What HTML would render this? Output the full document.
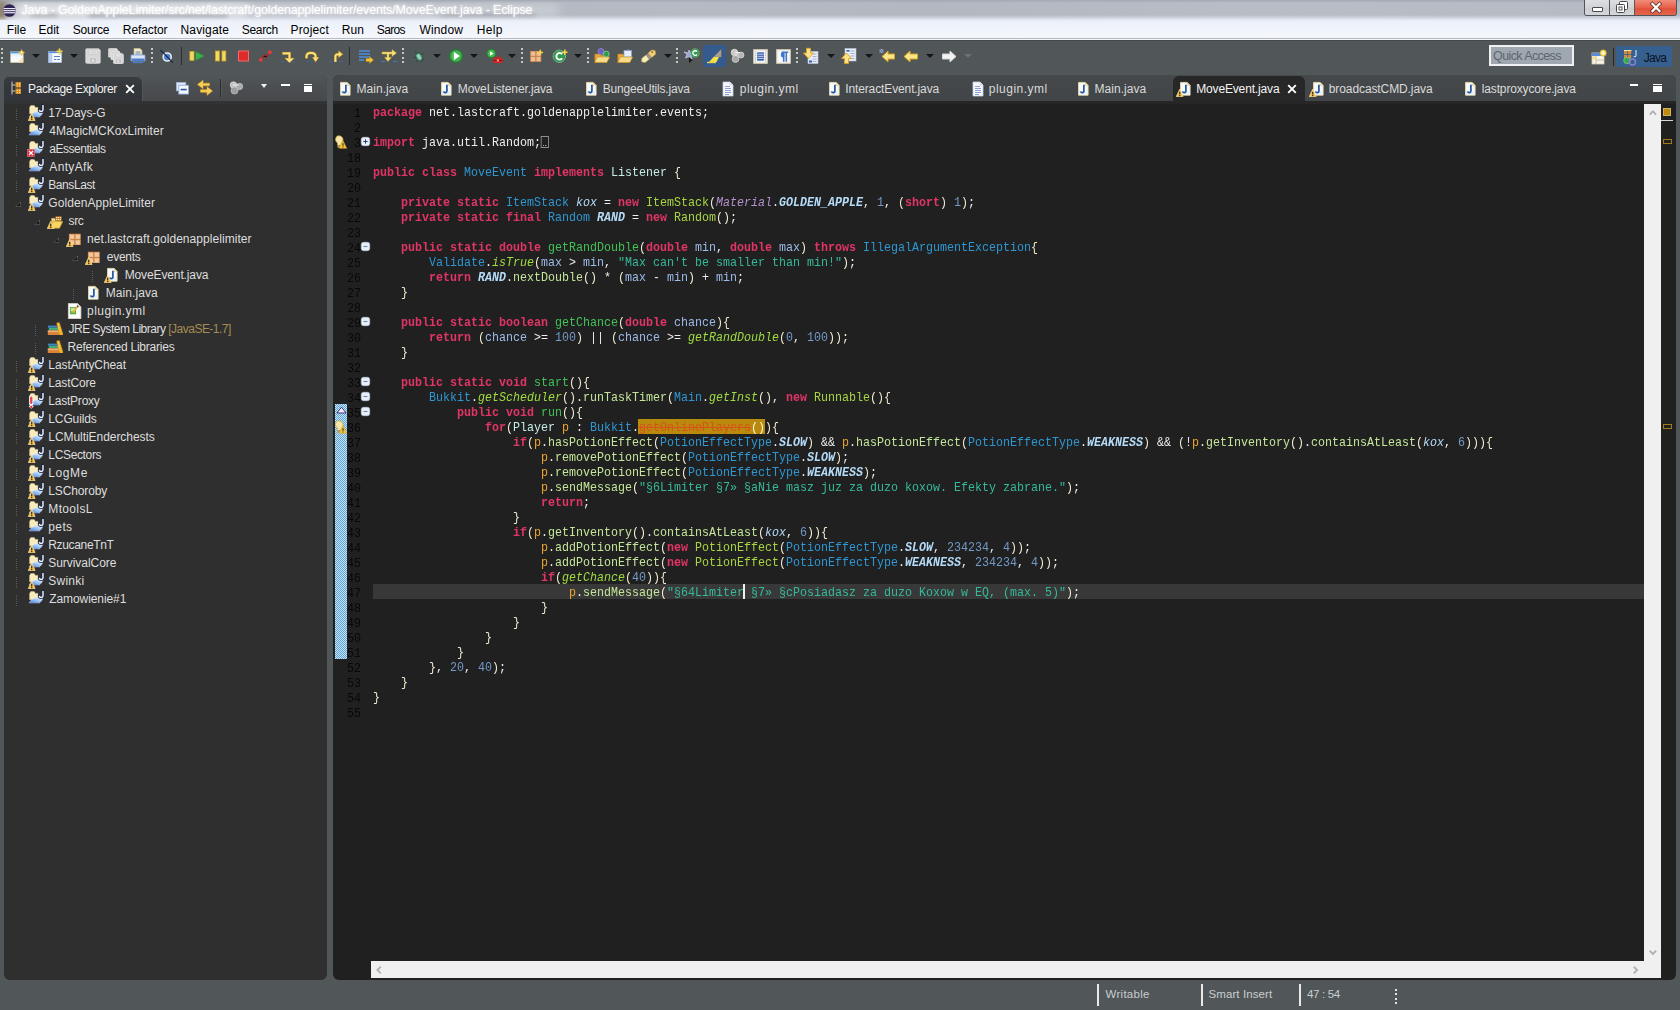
<!DOCTYPE html>
<html><head><meta charset="utf-8"><title>Eclipse</title>
<style>
*{box-sizing:border-box;margin:0;padding:0}
html,body{width:1680px;height:1010px;overflow:hidden}
body{position:relative;background:#515658;font-family:"Liberation Sans",sans-serif;font-size:12px;color:#e4e4e4}
.abs{position:absolute}
#title{left:0;top:0;width:1680px;height:20px;background:linear-gradient(90deg,#9a9a9c 0,#b9bcc2 1%,#b3b8c1 14%,#b6bbc3 40%,#b2b7c0 55%,#b9bec6 75%,#b5bac3 100%);overflow:hidden}
#title .txt{left:21px;top:3px;font-size:12.4px;color:#fff;white-space:nowrap;text-shadow:0 0 3px rgba(255,255,255,.75),0 0 6px rgba(255,255,255,.45)}
#menu{left:0;top:20px;width:1680px;height:20px;background:linear-gradient(180deg,#e6ebf5 0,#edf1fa 12%,#f0f4fb 45%,#f5f7fc 85%,#e4e8f0 100%)}
#menu span{position:absolute;top:3px;color:#000;font-size:12px;white-space:nowrap}
#tool{left:0;top:40px;width:1680px;height:36px;background:#515658}
.grip{position:absolute;top:48px;width:2px;height:16px;background:repeating-linear-gradient(180deg,#c6c6c6 0,#c6c6c6 1.800px,transparent 1.800px,transparent 4.450px)}
.dd{position:absolute;top:54px;width:0;height:0;border-left:4px solid transparent;border-right:4px solid transparent;border-top:4px solid #141618}
.vsep{position:absolute;top:47px;width:1px;height:18px;background:#2c2f31}
.ic{position:absolute;top:48px;width:16px;height:16px}
svg{display:block;overflow:visible}
/* panels */
.panel{position:absolute;border-radius:6px;overflow:hidden}
#left{left:4px;top:76px;width:323px;height:903.500px;background:#2f2f2f}
#left .tabbar{left:0;top:0;width:323px;height:24.500px;background:linear-gradient(#515658,#4c4f52 40%,#47494c)}
#left .atab{left:0;top:0;width:139px;height:25px;background:linear-gradient(#383c40,#32363a 60%);border-radius:6px 6px 0 0;box-shadow:inset -1px 1px 0 #50555a}
#ed{left:333px;top:75px;width:1343px;height:904.500px;background:#202020}
#ed .tabbar{left:0;top:0;width:1343px;height:26px;background:linear-gradient(#45494b,#424547)}
.tab{position:absolute;top:5px;font-size:12px;color:#dcdcdc;white-space:nowrap}
.tree{position:absolute;font-size:12px;color:#dedede;white-space:nowrap;height:18px;line-height:18px}
/* code */
#code{position:absolute;left:373px;top:105px;font-family:"Liberation Mono",monospace;font-size:12.800px;line-height:15px;color:#eeeeee;white-space:pre;transform:scaleX(.91146);transform-origin:0 0}
#code div{height:15px}
#ln{position:absolute;left:329.200px;top:106.600px;width:32px;text-align:right;font-family:"Liberation Mono",monospace;font-size:12px;line-height:15px;color:#080808;transform:scaleX(.9722);transform-origin:100% 0}
#ln div{height:15px}
.b{color:#f1ead0}
.k{color:#e13566;font-weight:bold}
.c{color:#2e97d3}
.i{color:#c4efe8}
.md{color:#42c256}
.m{color:#c4e69a}
.sm{color:#9fdc40;font-style:italic}
.ct{color:#a8d640}
.lv{color:#f0a62f}
.pv{color:#9dbbe9}
.n{color:#7399c6}
.s{color:#36b99a}
.sf{color:#b4dbf8;font-style:italic}
.sfb{color:#b4dbf8;font-style:italic;font-weight:bold}
.en{color:#b592cf;font-style:italic}
.depbg{color:#fdf6d8}
.dep{color:#d8521c;text-decoration:line-through}
#status{left:0;top:980px;width:1680px;height:30px}
#status span{position:absolute;top:8px;font-size:11.5px;color:#c9cdd0}
#status i{position:absolute;top:4px;width:2px;height:22px;background:#e8e8e8}
</style></head><body>
<style>
#m0{left:6.80px !important;letter-spacing:0.000px}
#m1{left:38.50px !important;letter-spacing:0.000px}
#m2{left:72.80px !important;letter-spacing:-0.260px}
#m3{left:122.80px !important;letter-spacing:-0.086px}
#m4{left:180.50px !important;letter-spacing:0.143px}
#m5{left:241.80px !important;letter-spacing:-0.320px}
#m6{left:290.50px !important;letter-spacing:0.167px}
#m7{left:341.80px !important;letter-spacing:0.000px}
#m8{left:376.80px !important;letter-spacing:-0.650px}
#m9{left:419.50px !important;letter-spacing:0.140px}
#m10{left:476.80px !important;letter-spacing:0.333px}
#tr0{left:48.30px !important;letter-spacing:-0.100px}
#tr1{left:49.30px !important;letter-spacing:0.018px}
#tr2{left:49.30px !important;letter-spacing:-0.470px}
#tr3{left:49.30px !important;letter-spacing:0.350px}
#tr4{left:48.30px !important;letter-spacing:-0.429px}
#tr5{left:48.30px !important;letter-spacing:0.076px}
#tr6{left:68.50px !important;letter-spacing:-0.350px}
#tr7{left:87.10px !important;letter-spacing:0.055px}
#tr8{left:106.80px !important;letter-spacing:-0.280px}
#tr9{left:124.70px !important;letter-spacing:-0.123px}
#tr10{left:105.80px !important;letter-spacing:0.063px}
#tr11{left:87.10px !important;letter-spacing:0.444px}
#tr12{left:68.50px !important;letter-spacing:-0.507px}
#tr13{left:67.50px !important;letter-spacing:-0.221px}
#tr14{left:48.30px !important;letter-spacing:-0.083px}
#tr15{left:48.30px !important;letter-spacing:-0.143px}
#tr16{left:48.30px !important;letter-spacing:-0.225px}
#tr17{left:48.30px !important;letter-spacing:-0.129px}
#tr18{left:48.30px !important;letter-spacing:-0.053px}
#tr19{left:48.30px !important;letter-spacing:-0.338px}
#tr20{left:48.30px !important;letter-spacing:0.600px}
#tr21{left:48.30px !important;letter-spacing:-0.125px}
#tr22{left:48.30px !important;letter-spacing:0.350px}
#tr23{left:48.30px !important;letter-spacing:0.367px}
#tr24{left:48.30px !important;letter-spacing:-0.344px}
#tr25{left:48.30px !important;letter-spacing:-0.055px}
#tr26{left:48.30px !important;letter-spacing:0.240px}
#tr27{left:49.30px !important;letter-spacing:-0.091px}
#t0{left:356.50px !important;letter-spacing:0.038px}
#t1{left:457.80px !important;letter-spacing:-0.125px}
#t2{left:602.80px !important;letter-spacing:-0.200px}
#t3{left:739.80px !important;letter-spacing:0.489px}
#t4{left:845.20px !important;letter-spacing:-0.118px}
#t5{left:988.80px !important;letter-spacing:0.489px}
#t6{left:1094.50px !important;letter-spacing:0.037px}
#t7{left:1196.20px !important;letter-spacing:-0.154px}
#t8{left:1328.80px !important;letter-spacing:-0.100px}
#t9{left:1481.80px !important;letter-spacing:-0.153px}
#s0{left:1105.50px !important;letter-spacing:0.286px}
#s1{left:1208.50px !important;letter-spacing:0.091px}
#s2{left:1307.00px !important;letter-spacing:-0.333px}
#ttl{left:21.50px !important;letter-spacing:-0.097px}
#pe{left:28.00px !important;letter-spacing:-0.367px}
#qa{left:1493.00px !important;letter-spacing:-0.591px}
#jv{left:1643.80px !important;letter-spacing:-0.700px}
</style>
<div id="title" class="abs">
 <div class="abs" style="left:14px;top:3px;width:235px;height:15px;border-radius:8px;background:#e4e6e9;filter:blur(4px);opacity:.95"></div>
 <div class="abs" style="left:200px;top:4px;width:360px;height:13px;border-radius:8px;background:#d9dce1;filter:blur(5px);opacity:.55"></div>
 <div class="abs" style="left:88px;top:15px;width:140px;height:4px;border-radius:3px;background:#7d8289;filter:blur(2px);opacity:.75"></div>
 <div class="abs" style="left:30px;top:15px;width:28px;height:4px;border-radius:3px;background:#8c9290;filter:blur(2px);opacity:.7"></div>
 <div class="abs" style="left:440px;top:14px;width:95px;height:5px;border-radius:3px;background:#8f949c;filter:blur(2.500px);opacity:.7"></div>
 <div class="abs" style="left:0;top:0;width:1680px;height:3px;background:linear-gradient(#a3a9b3,rgba(170,176,186,0))"></div>
 <div class="abs" style="left:0;top:15px;width:1680px;height:5px;background:linear-gradient(rgba(236,240,248,0),rgba(236,240,248,.85))"></div>
 <div class="abs" style="left:-3px;top:2px;width:9px;height:17px;background:#8f7d62;filter:blur(2.500px);opacity:.8"></div>
 <svg class="abs" style="left:3px;top:4px" width="13" height="13" viewBox="0 0 15 15"><circle cx="7.500" cy="7.500" r="7.300" fill="#2c2255"/><rect x="0.600" y="4.600" width="13.800" height="1.400" fill="#e9e9f3"/><rect x="0.300" y="7" width="14.400" height="1.400" fill="#e9e9f3"/><rect x="0.800" y="9.400" width="13.400" height="1.400" fill="#e9e9f3"/></svg>
 <div class="abs txt" id="ttl">Java - GoldenAppleLimiter/src/net/lastcraft/goldenapplelimiter/events/MoveEvent.java - Eclipse</div>
 <div class="abs" style="left:1584px;top:0;width:93px;height:16px;border-radius:0 0 3px 3px;overflow:hidden;border:1px solid #4f535a;border-top:0">
  <div class="abs" style="left:0;top:0;width:25px;height:16px;background:linear-gradient(#dcdee1,#d0d2d5 50%,#cbcdd0 51%,#d6d8db);border-right:1px solid #55595f"></div>
  <div class="abs" style="left:25px;top:0;width:25px;height:16px;background:linear-gradient(#dcdee1,#d0d2d5 50%,#cbcdd0 51%,#d6d8db);border-right:1px solid #55595f"></div>
  <div class="abs" style="left:50px;top:0;width:43px;height:16px;background:linear-gradient(#f08c78,#e8624c 45%,#e0503a 55%,#e46a50)"></div>
  <div class="abs" style="left:7px;top:7px;width:11px;height:5px;background:#fff;border:1px solid #4a4a4a;border-radius:1px"></div>
  <svg class="abs" style="left:31px;top:1px" width="12" height="12" viewBox="0 0 12 12"><rect x="3.500" y="0.500" width="8" height="8" rx="1" fill="#fff" stroke="#444"/><rect x="0.500" y="3.500" width="8" height="8" rx="1" fill="#fff" stroke="#444"/><rect x="3" y="6" width="3" height="3" fill="#fff" stroke="#555" stroke-width="1"/></svg>
  <svg class="abs" style="left:66px;top:3px" width="10" height="9" viewBox="0 0 10 9"><path d="M1.500 1 L8.500 8 M8.500 1 L1.500 8" stroke="#5a2a20" stroke-width="3.800" stroke-linecap="square"/><path d="M1.500 1 L8.500 8 M8.500 1 L1.500 8" stroke="#fff" stroke-width="2.300" stroke-linecap="square"/></svg>
 </div>
</div>
<div id="menu" class="abs">
<span id="m0" style="left:7px">File</span><span id="m1" style="left:39px">Edit</span><span id="m2" style="left:73px">Source</span><span id="m3" style="left:123px">Refactor</span><span id="m4" style="left:181px">Navigate</span><span id="m5" style="left:242px">Search</span><span id="m6" style="left:291px">Project</span><span id="m7" style="left:342px">Run</span><span id="m8" style="left:377px">Saros</span><span id="m9" style="left:419px">Window</span><span id="m10" style="left:477px">Help</span>
</div>
<div class="abs" style="left:0;top:38px;width:1680px;height:1px;background:#b8bcc4"></div>
<div class="abs" style="left:0;top:39px;width:1680px;height:1px;background:#f3f5f8"></div>
<div id="tool" class="abs"></div>
<div class="abs" style="left:0;top:40px;width:1680px;height:1px;background:#44484b"></div>
<div class="grip" style="left:1px"></div>
<!-- new -->
<svg class="ic" style="left:10px" viewBox="0 0 16 16"><defs><linearGradient id="gnw" x1="0" y1="0" x2="0" y2="1"><stop offset="0" stop-color="#cfe6fb"/><stop offset=".5" stop-color="#f4f9fe"/><stop offset="1" stop-color="#fdfaf0"/></linearGradient></defs><rect x=".6" y="3.800" width="12.600" height="10.800" fill="url(#gnw)" stroke="#d6c9a0" stroke-width=".5"/><rect x=".6" y="3.800" width="12.600" height="1.500" fill="#4f94e2"/><path d="M8 14.600l5.200-6v6z" fill="#f3e3b4"/><path d="M11.600 1.200l.9 2.400 2.400.9-2.400.9-.9 2.400-.9-2.400-2.400-.9 2.400-.9z" fill="#f8d548" stroke="#e0a820" stroke-width=".4"/><circle cx="11.600" cy="4.500" r=".9" fill="#fff8d8"/></svg>
<div class="dd" style="left:32px"></div>
<!-- new project -->
<svg class="ic" style="left:48px" viewBox="0 0 16 16"><rect x=".6" y="3.600" width="13" height="11" fill="#f8fbfe" stroke="#a9c2e6" stroke-width=".6"/><rect x=".6" y="3.600" width="13" height="1.500" fill="#4f8ad8"/><rect x="1" y="5.200" width="3.300" height="9" fill="#b4d0f2"/><path d="M6 8.500h6M6 11.500h2.300M9.300 11.500h2.700" stroke="#5a7fc0" stroke-width="1.200"/><path d="M11.500 .4v6M8.500 3.400h6" stroke="#f8d548" stroke-width="1.700"/></svg>
<div class="dd" style="left:70px"></div>
<!-- save -->
<svg class="ic" style="left:85px" viewBox="0 0 16 16"><path d="M.8 1.500q0-.7.7-.7h12.300l1.400 1.400v12.300q0 .7-.7.700h-13q-.7 0-.7-.7z" fill="#d6d6d6" stroke="#e6e6e6" stroke-width=".7"/><rect x="3.800" y="1.300" width="8.400" height="5.200" fill="#e4e4e4" stroke="#c4c4c4" stroke-width=".5"/><path d="M5 3h6M5 4.800h6" stroke="#c8c8c8" stroke-width=".7"/><rect x="4.200" y="9.300" width="7.600" height="5.700" fill="#c6c6c6" stroke="#e8e8e8" stroke-width=".6"/><rect x="6.800" y="11" width="2.400" height="3.200" fill="#e2e2e2" stroke="#b8b8b8" stroke-width=".4"/></svg>
<!-- save all -->
<svg class="ic" style="left:108px" viewBox="0 0 16 16"><path d="M.6 1.200q0-.6.6-.6h7.300l1 1v7.500h-8.900z" fill="#d6d6d6" stroke="#e6e6e6" stroke-width=".7"/><path d="M3 3.600q0-.6.6-.6h7.300l1 1v7.500h-8.900z" fill="#d6d6d6" stroke="#e6e6e6" stroke-width=".7"/><path d="M5.500 6.100q0-.6.6-.6h8l1.300 1.300v8q0 .6-.6.600h-8.700q-.6 0-.6-.6z" fill="#d6d6d6" stroke="#e8e8e8" stroke-width=".7"/><rect x="7.400" y="6" width="5.600" height="3" fill="#e4e4e4" stroke="#c4c4c4" stroke-width=".4"/><rect x="7.400" y="11" width="6" height="4.300" fill="#c4c4c4" stroke="#e8e8e8" stroke-width=".5"/><rect x="9.300" y="12.300" width="1.800" height="2.500" fill="#e2e2e2"/></svg>
<!-- print -->
<svg class="ic" style="left:130px" viewBox="0 0 16 16"><path d="M4 .5h6l2 2v5h-8z" fill="#f4ecd0" stroke="#cbb980" stroke-width=".7"/><rect x="5.500" y="3.500" width="5" height="1" fill="#5a86c4"/><rect x="5.500" y="5.500" width="5" height="1" fill="#5a86c4"/><path d="M1 7h14v6h-14z" fill="#dbe6f6" stroke="#7fa3d8" stroke-width=".8"/><rect x="1.500" y="10.500" width="13" height="2.500" fill="#4f7fcb"/><rect x="3" y="14" width="10" height="1.200" fill="#4f7fcb"/></svg>
<div class="grip" style="left:151px"></div>
<!-- skip breakpoints -->
<svg class="ic" style="left:160px" viewBox="0 0 16 16"><circle cx="7.200" cy="9" r="4" fill="#4f7fca" stroke="#e8eef8" stroke-width="1.600"/><path d="M.5 2.200l12.500 12.500" stroke="#15224e" stroke-width="1.200"/></svg>
<div class="vsep" style="left:180.500px"></div>
<!-- resume -->
<svg class="ic" style="left:189px" viewBox="0 0 18 16"><rect x="1" y="3" width="4.600" height="10" fill="#f3d965" stroke="#d2a923" stroke-width=".8"/><path d="M7.500 3l9.500 5-9.500 5z" fill="#38b24a" stroke="#2a8a3a" stroke-width=".6"/></svg>
<!-- suspend -->
<svg class="ic" style="left:213px" viewBox="0 0 16 16"><rect x="2.500" y="3" width="3.800" height="10" fill="#f3d965" stroke="#d2a923" stroke-width=".8"/><rect x="9" y="3" width="3.800" height="10" fill="#f3d965" stroke="#d2a923" stroke-width=".8"/></svg>
<!-- terminate -->
<svg class="ic" style="left:236px" viewBox="0 0 16 16"><rect x="2.500" y="3" width="10" height="10" fill="#e02b2b" stroke="#f36a6a" stroke-width="1"/></svg>
<!-- disconnect -->
<svg class="ic" style="left:257px" viewBox="0 0 16 16"><path d="M4 11.500l3-4 2 2 3.500-5" stroke="#b3262a" stroke-width="1.500" fill="none"/><circle cx="3.800" cy="11.800" r="1.900" fill="#e63b3b"/><circle cx="12.800" cy="4.200" r="1.900" fill="#e63b3b"/><rect x="6.500" y="7.800" width="3.500" height="1.200" fill="#201010"/></svg>
<!-- step into -->
<svg class="ic" style="left:280px" viewBox="0 0 16 16"><path d="M1 13.600h3.500M11 13.600h4" stroke="#4468a4" stroke-width="1.100" stroke-dasharray="1.600 1" opacity=".85"/><path d="M2.300 5.300h7.200v5.200" stroke="#c8981e" stroke-width="2.700" fill="none"/><path d="M4.300 10l5.200 4.900 5.200-4.900z" fill="#c8981e"/><path d="M2.600 5.300h6.900v5" stroke="#fbe382" stroke-width="1.700" fill="none"/><path d="M5.400 10.600l4.100 3.800 4.100-3.800z" fill="#fbe382"/></svg>
<!-- step over -->
<svg class="ic" style="left:304px" viewBox="0 0 16 16"><path d="M3 13.600h5.500" stroke="#4468a4" stroke-width="1.100" stroke-dasharray="1.600 1" opacity=".85"/><path d="M2.500 10.500v-2c0-2.400 1.800-3.700 4.500-3.700s4.600 1.300 4.600 3.700v1" stroke="#c8981e" stroke-width="2.700" fill="none"/><path d="M8 9.100l3.600 5.400 3.600-5.400z" fill="#c8981e"/><path d="M2.500 10.200v-1.700c0-2.400 1.800-3.700 4.500-3.700s4.600 1.300 4.600 3.700v1" stroke="#fbe382" stroke-width="1.700" fill="none"/><path d="M8.900 9.600l2.700 4 2.700-4z" fill="#fbe382"/></svg>
<!-- step return -->
<svg class="ic" style="left:328px" viewBox="0 0 16 16"><path d="M1 13.600h4M11 13.600h4" stroke="#4468a4" stroke-width="1.100" stroke-dasharray="1.600 1" opacity=".85"/><path d="M7.400 14v-5.500c0-1.600.8-2.200 2.600-2.200h1" stroke="#c8981e" stroke-width="2.700" fill="none"/><path d="M10.300 2.300l5 4-5 4z" fill="#c8981e"/><path d="M7.400 13.700v-5.200c0-1.600.8-2.200 2.600-2.200h1" stroke="#fbe382" stroke-width="1.700" fill="none"/><path d="M10.900 3.500l3.400 2.800-3.400 2.800z" fill="#fbe382"/></svg>
<div class="vsep" style="left:349px"></div>
<!-- drop to frame -->
<svg class="ic" style="left:358px" viewBox="0 0 16 16"><path d="M1 3h11M1 6h11M1 9h11M1 12h5" stroke="#4d8fe0" stroke-width="1.600"/><path d="M8 10.500h3.500v-2l4 3.500-4 3.500v-2h-3.500z" fill="#f4c534" stroke="#b98712" stroke-width=".5"/></svg>
<!-- step filters -->
<svg class="ic" style="left:381px" viewBox="0 0 16 16"><path d="M1 4h10v-2.500l4.500 3.500-4.500 3.500v-2.500h-3v3.500h2.500l-3.500 4-3.500-4h2.500v-3.500h-5z" fill="#f7e07a" stroke="#c9a030" stroke-width=".5"/><path d="M0 13.500h4M12 13.500h4" stroke="#4a78c0" stroke-width="1.200"/></svg>
<div class="grip" style="left:402px"></div>
<!-- debug -->
<svg class="ic" style="left:411px" viewBox="0 0 16 16"><path d="M3.500 3l2.500 2.500M12.500 5l-2 1.500M2.500 9.500l2.500-.2M13 11.500l-2.200-.5M5.500 14l1.200-2M10.500 14.500l-.8-1.800" stroke="#27483a" stroke-width=".9"/><ellipse cx="8" cy="8.800" rx="2.700" ry="4" transform="rotate(-28 8 8.800)" fill="#7cc4a8" stroke="#245c46" stroke-width=".8"/><path d="M6.800 7l2.600 3.500" stroke="#c8ecdc" stroke-width=".8"/><circle cx="5.700" cy="5" r="1.300" fill="#2f5e4a"/></svg>
<div class="dd" style="left:433px"></div>
<!-- run -->
<svg class="ic" style="left:448px" viewBox="0 0 16 16"><circle cx="8" cy="8" r="6.600" fill="#2e9a3c" stroke="#1f7a2c" stroke-width=".8"/><circle cx="8" cy="8" r="5.200" fill="#43b552"/><path d="M5.800 3.800l6 4.200-6 4.200z" fill="#fff"/></svg>
<div class="dd" style="left:470px"></div>
<!-- run ext -->
<svg class="ic" style="left:486px" viewBox="0 0 16 16"><circle cx="5.300" cy="5.500" r="4.500" fill="#2e9a3c" stroke="#1f7a2c" stroke-width=".6"/><circle cx="5.300" cy="5.500" r="3.500" fill="#4ab85a"/><path d="M4 3.200l3.500 2.300-3.500 2.300z" fill="#fff"/><path d="M7.400 10.300h9v4.700h-9z" fill="#d92222"/><path d="M9.500 10.300v-1.100h4.800v1.100" stroke="#d92222" stroke-width="1.100" fill="none"/><rect x="7.400" y="12" width="9" height=".9" fill="#7c1010"/><rect x="10.800" y="11.500" width="2.200" height="1.800" fill="#f0a0a0"/></svg>
<div class="dd" style="left:508px"></div>
<div class="grip" style="left:521px"></div>
<!-- new package -->
<svg class="ic" style="left:529px" viewBox="0 0 16 16"><rect x="1.300" y="2.900" width="11" height="11" fill="#b06a3a"/><rect x="1.800" y="3.400" width="4.600" height="4.600" fill="#ecc096" stroke="#d8905a" stroke-width=".6"/><rect x="7.200" y="3.400" width="4.600" height="4.600" fill="#ecc096" stroke="#d8905a" stroke-width=".6"/><rect x="1.800" y="8.800" width="4.600" height="4.600" fill="#ecc096" stroke="#d8905a" stroke-width=".6"/><rect x="7.200" y="8.800" width="4.600" height="4.600" fill="#ecc096" stroke="#d8905a" stroke-width=".6"/><path d="M11.300 1.800v5.400M8.600 4.500h5.400" stroke="#f8d548" stroke-width="1.500"/></svg>
<!-- new class -->
<svg class="ic" style="left:552px" viewBox="0 0 16 16"><circle cx="7.300" cy="8.300" r="6.200" fill="#2f9a4c" stroke="#a6dcb4" stroke-width=".8" stroke-dasharray="1.500 .8"/><path d="M10.200 6.200a3.300 3.300 0 1 0 0 4.200" stroke="#fff" stroke-width="1.900" fill="none"/><path d="M12.800 1.500v5.400M10.100 4.200h5.400" stroke="#f8d548" stroke-width="1.500"/></svg>
<div class="dd" style="left:574px"></div>
<div class="grip" style="left:587px"></div>
<!-- open type -->
<svg class="ic" style="left:594px" viewBox="0 0 16 16"><path d="M.8 6h5l1 1.200h6v7.300h-12z" fill="#e9a93c" stroke="#b87a18" stroke-width=".6"/><path d="M.8 14.500l2.500-5.500h12.500l-3 5.500z" fill="#f8dc8c" stroke="#c08a20" stroke-width=".6"/><circle cx="7" cy="3.500" r="3" fill="#6a5fc0" stroke="#9b94de" stroke-width=".7"/><circle cx="12.300" cy="6" r="2.900" fill="#2f9a4c" stroke="#8fd6a0" stroke-width=".7"/></svg>
<!-- open task -->
<svg class="ic" style="left:617px" viewBox="0 0 16 16"><path d="M.8 6h5l1 1.200h6v7.300h-12z" fill="#e9a93c" stroke="#b87a18" stroke-width=".6"/><rect x="7" y="2.500" width="7.500" height="6.500" fill="#e6eefc" stroke="#8ea8d8" stroke-width=".7"/><path d="M9 2.500l2-1.500 2 1.500" fill="#7a8db8"/><path d="M.8 14.500l2.500-5.500h12.500l-3 5.500z" fill="#f8dc8c" stroke="#c08a20" stroke-width=".6"/></svg>
<!-- search torch -->
<svg class="ic" style="left:641px" viewBox="0 0 18 16"><g transform="rotate(-39 9 8)"><path d="M-1.500 8l2.500-3h6v6h-6z" fill="#f6eeb4" stroke="#cdbb62" stroke-width=".5"/><rect x="7" y="5" width="3.200" height="6" fill="#9d9390"/><path d="M10.200 4.700h5.800l2.200 3.300-2.200 3.300h-5.800z" fill="#efcf78" stroke="#b8923a" stroke-width=".5"/><circle cx="14.500" cy="6.800" r=".8" fill="#3a2c10"/></g></svg>
<div class="dd" style="left:664px"></div>
<div class="grip" style="left:676px"></div>
<!-- toggle mark occurrences-ish -->
<svg class="ic" style="left:684px" viewBox="0 0 16 16"><path d="M0 4l4 1 1-3 1.500 3 3.500-.5-3 2.500 1 4-3-2.500-3.500 1.500 1.500-3.500z" fill="#9aa6d8" stroke="#d8def4" stroke-width=".6"/><circle cx="11" cy="5" r="4.300" fill="#2f9a4c" stroke="#8fd6a0" stroke-width=".7" stroke-dasharray="1.300 .7"/><path d="M13 3.600a2.300 2.300 0 1 0 0 2.900" stroke="#fff" stroke-width="1.400" fill="none"/><path d="M5 9.500l3.500 2.500-3.500 3z" fill="#161616"/></svg>
<div class="abs" style="left:703.300px;top:44.700px;width:23.200px;height:22.500px;background:#355b8e;border-radius:3px"></div>
<!-- marker -->
<svg class="ic" style="left:707px" viewBox="0 0 16 16"><path d="M2 14l5-5.500 5 .5-2.500 5z" fill="#f3e04a"/><path d="M7 8.500l7.500-7.500v8l-2.500 0z" fill="#a89f8c"/><path d="M14.500 1v8" stroke="#6e665a" stroke-width="1"/><path d="M0 14.500h9" stroke="#e8d24a" stroke-width="1.400"/></svg>
<!-- disabled icon -->
<svg class="ic" style="left:730px" viewBox="0 0 16 16"><circle cx="4.500" cy="4.500" r="3.300" fill="#c9c9c9" stroke="#e6e6e6" stroke-width=".7"/><circle cx="11" cy="7" r="3" fill="#b6b6b6" stroke="#dedede" stroke-width=".7"/><circle cx="5.500" cy="11" r="3.400" fill="#a9a9a9" stroke="#d8d8d8" stroke-width=".7"/><path d="M5 4.500h5M5 7h3" stroke="#f0f0f0" stroke-width="1"/></svg>
<!-- block selection -->
<svg class="ic" style="left:752.500px;top:48.500px;width:15px;height:15px" viewBox="0 0 16 16"><rect x=".8" y=".8" width="14.400" height="14.400" fill="#f4f6fa" stroke="#d8cfb4" stroke-width="1.200"/><path d="M2.800 2.500v11M13.200 2.500v11" stroke="#9aa6c0" stroke-width="1" stroke-dasharray="1 1"/><rect x="4.500" y="3.500" width="7" height="9" fill="#3a5fa8"/><path d="M5 5.500h6M5 7.800h6M5 10h6" stroke="#dfe8f8" stroke-width=".9"/></svg>
<!-- whitespace -->
<svg class="ic" style="left:775.500px;top:48.500px;width:15px;height:15px" viewBox="0 0 16 16"><rect x=".8" y=".8" width="14.400" height="14.400" fill="#f8f9fc" stroke="#d8cfb4" stroke-width="1.200"/><path d="M8.200 13.500v-10M11 13.500v-10M6 3.500h7" stroke="#3f74c8" stroke-width="1.700" fill="none"/><path d="M8.200 3.500a2.700 2.700 0 0 0 0 5.400z" fill="#3f74c8" stroke="#3f74c8" stroke-width="1"/></svg>
<div class="grip" style="left:796px"></div>
<!-- next annotation -->
<svg class="ic" style="left:803px" viewBox="0 0 16 16"><rect x="5" y="3.500" width="10" height="12" fill="#e8eef8" stroke="#b8c4d8" stroke-width=".6"/><path d="M9.500 6h4M9.500 8.500h4M9.500 11h4M9.500 13.500h4" stroke="#8ea0c0" stroke-width=".8"/><rect x="6" y="12.500" width="3" height="2" fill="#2f5fb0"/><path d="M3.500 .3h4v4.700h3l-5 5.500-5-5.500h3z" fill="#fbe28a" stroke="#e0a020" stroke-width=".9"/></svg>
<div class="dd" style="left:827px"></div>
<!-- prev annotation -->
<svg class="ic" style="left:841px" viewBox="0 0 16 16"><rect x="4" y=".5" width="11" height="12.500" fill="#e8eef8" stroke="#b8c4d8" stroke-width=".6"/><rect x="5.500" y="2" width="3" height="1.600" fill="#2f5fb0"/><path d="M9.500 3h4M9.500 5.500h4M9.500 8h4M9.500 10.500h4" stroke="#8ea0c0" stroke-width=".8"/><path d="M3.500 15.500h4v-5h3l-5-5.500-5 5.500h3z" fill="#fbe28a" stroke="#e0a020" stroke-width=".9"/></svg>
<div class="dd" style="left:865px"></div>
<!-- last edit -->
<svg class="ic" style="left:879px" viewBox="0 0 16 16"><path d="M3 8.500l6-5.500v3h6.500v5h-6.500v3z" fill="#fae68a" stroke="#d9a520" stroke-width="1"/><path d="M1 1.500l3 3M4 1.500l-3 3M2.500 1v4M.5 3h4" stroke="#cfe0f8" stroke-width=".8"/><circle cx="2.500" cy="3" r="1" fill="#3f74c8"/></svg>
<!-- back -->
<svg class="ic" style="left:903px" viewBox="0 0 16 16"><path d="M1 8.500l6-5.500v3h7.500v5h-7.500v3z" fill="#fae68a" stroke="#d9a520" stroke-width="1"/></svg>
<div class="dd" style="left:926px"></div>
<!-- forward -->
<svg class="ic" style="left:941px" viewBox="0 0 16 16"><path d="M15 8.500l-6-5.500v3h-7.500v5h7.500v3z" fill="#f4f4f4" stroke="#d8d8d8" stroke-width="1"/></svg>
<div class="dd" style="left:964px;border-top-color:#6d7173"></div>
<!-- quick access -->
<div class="abs" style="left:1489px;top:45px;width:85px;height:21px;background:#9fa7b0;border:2px solid #eef0f2"></div>
<div class="abs" style="left:1493px;top:49px;font-size:12.5px;color:#5d656e;white-space:nowrap" id="qa">Quick Access</div>
<!-- open perspective -->
<svg class="ic" style="left:1591px;top:49px" viewBox="0 0 16 16"><rect x="1" y="4" width="12" height="11" fill="#f4f4ec" stroke="#d8d2b0" stroke-width=".8"/><rect x="1" y="4" width="12" height="3" fill="#5a8fd8"/><path d="M5 7v8M5 11h8" stroke="#c9c29a" stroke-width="1"/><rect x="1.500" y="7.500" width="3" height="3.200" fill="#f2e08a"/><circle cx="12.200" cy="4" r="3.200" fill="#f6d85a" stroke="#c9a020" stroke-width=".5"/><path d="M12.200 2v4M10.200 4h4" stroke="#fff" stroke-width="1.100"/></svg>
<div class="vsep" style="left:1613px;top:48px;width:1px;height:18px;background:#25282a"></div>
<div class="abs" style="left:1616px;top:46px;width:56px;height:21.400px;background:#36608f;border-radius:2px"></div>
<svg class="ic" style="left:1623px;top:50px" viewBox="0 0 16 16"><rect x="1" y="1" width="3.200" height="3.200" fill="#d98a3c"/><rect x="5" y="1" width="3.200" height="3.200" fill="#d98a3c"/><rect x="1" y="5" width="3.200" height="3.200" fill="#d98a3c"/><rect x="5" y="5" width="3.200" height="3.200" fill="#d98a3c"/><path d="M1 .5h7.500" stroke="#f6e6a0" stroke-width="1"/><path d="M13 0v5.500c0 1.500-2 1.500-2 .5" stroke="#cfe0f8" stroke-width="1.100" fill="none"/><circle cx="4" cy="10.500" r="3.300" fill="#3aa84a" stroke="#8fd6a0" stroke-width=".6"/><circle cx="9.500" cy="12" r="3" fill="none" stroke="#8a7fd8" stroke-width="1.400"/></svg>
<div class="abs" style="left:1643px;top:51px;font-size:12px;color:#0b1220;white-space:nowrap" id="jv">Java</div>
<svg width="0" height="0" style="position:absolute">
<defs>
<linearGradient id="gfold" x1="0" y1="1" x2="1" y2="0"><stop offset="0" stop-color="#3a7ae4"/><stop offset=".45" stop-color="#8fbcf4"/><stop offset="1" stop-color="#eef5fd"/></linearGradient>
<symbol id="proj" viewBox="0 0 16 16" overflow="visible"><path d="M1.600 3.400l1.200-1.800h3.400l1.200 1.800h2.500v6.400h-8.300z" fill="#f8ebbc" stroke="#ecd898" stroke-width=".4"/><path d="M1 12.900c2.300-3.200 5.300-5.100 8.400-5.300l5.500.5c-.9 2.500-2.100 4-3.600 4.800z" fill="url(#gfold)" stroke="#e9f0fb" stroke-width=".45"/><path d="M1.200 12.900h9.800" stroke="#2a4fa8" stroke-width=".6" opacity=".7"/><path d="M15 1v4.700c0 2.300-3.500 2.400-3.700 .2" stroke="#18244e" stroke-width="2.900" fill="none" stroke-linecap="round"/><path d="M15 1v4.700c0 2.300-3.500 2.400-3.700 .2" stroke="#f4f7fc" stroke-width="1.400" fill="none"/></symbol>
<symbol id="warn" viewBox="0 0 8 8" preserveAspectRatio="none"><path d="M4 .2l3.800 7.600h-7.600z" fill="#f6c24e" stroke="#fbe3a4" stroke-width=".7" stroke-linejoin="round"/><path d="M4 2.800v2.600" stroke="#2a1a00" stroke-width="1.200"/><rect x="3.400" y="6" width="1.200" height="1.100" fill="#2a1a00"/></symbol>
<symbol id="err" viewBox="0 0 8 8"><rect x=".3" y=".3" width="7.400" height="7.400" fill="#d9293c" stroke="#f08a94" stroke-width=".5"/><path d="M2 2l4 4M6 2l-4 4" stroke="#fff" stroke-width="1.300"/></symbol>
<symbol id="excl" viewBox="0 0 6.500 13" preserveAspectRatio="none"><path d="M3.250 1.600v6" stroke="#fff" stroke-width="4.200" stroke-linecap="round"/><path d="M3.250 8.500l2.600 2.100-2.600 2.100-2.600-2.100z" fill="#fff"/><path d="M3.250 1.700v5" stroke="#e8434e" stroke-width="2.400" stroke-linecap="round"/><path d="M3.250 9.500l1.600 1.400-1.600 1.400-1.600-1.400z" fill="#e02c3c"/></symbol>
<symbol id="pkg" viewBox="0 0 16 16"><rect x="2.900" y="4.800" width="11.600" height="11.400" fill="#a8602c"/><rect x="3.300" y="5.200" width="5" height="4.900" fill="#f3c89e" stroke="#dc9456" stroke-width=".7"/><rect x="9.200" y="5.200" width="5" height="4.900" fill="#f3c89e" stroke="#dc9456" stroke-width=".7"/><rect x="3.300" y="11" width="5" height="4.900" fill="#f3c89e" stroke="#dc9456" stroke-width=".7"/><rect x="9.200" y="11" width="5" height="4.900" fill="#f3c89e" stroke="#dc9456" stroke-width=".7"/></symbol>
<symbol id="srcf" viewBox="0 0 16 16"><path d="M4.500 5.200h3.500l1 1.300h4v3h-8.500z" fill="#f2d986" stroke="#c89c30" stroke-width=".5"/><rect x="8.300" y="3.200" width="6.300" height="5" fill="#a8662a"/><path d="M9 3.900h1.400v1.400h-1.400zM10.900 3.900h1.400v1.400h-1.400zM12.800 3.900h1.400v1.400h-1.400zM9 5.900h1.400v1.400h-1.400zM10.900 5.900h1.400v1.400h-1.400zM12.800 5.900h1.400v1.400h-1.400z" fill="#fbe9a6"/><path d="M3 15.200l2.800-6.800h10l-3.300 6.800z" fill="#f9d65e" stroke="#c8962a" stroke-width=".6"/></symbol>
<symbol id="jfile" viewBox="0 0 16 16"><path d="M3.500 1.400h6.600l3 3v9.800h-9.600z" fill="#f6f9fd" stroke="#e9d7a0" stroke-width=".9"/><path d="M3.900 10h8.800v3.800h-8.800z" fill="#e2f0fa" opacity=".8"/><path d="M10.100 1.400v3h3" fill="#efe2b4" stroke="#e0cc90" stroke-width=".6"/><path d="M8.900 3.800v6.200c0 2-2.600 2.200-3.400.5" stroke="#24539a" stroke-width="1.700" fill="none"/></symbol>
<symbol id="yml" viewBox="0 0 16 16"><path d="M3 1h7l3 3v11h-10z" fill="#f7f9fd" stroke="#c8cede" stroke-width=".8"/><path d="M10 1v3h3" fill="#dfe4f0" stroke="#c8cede" stroke-width=".6"/><path d="M5 5.500h5M5 7.500h6M5 9.500h6M5 11.500h6M5 13.500h4" stroke="#7f97c8" stroke-width=".9"/></symbol>
<symbol id="ymlp" viewBox="0 0 16 16"><path d="M2.400 .4h9l3.500 3.500v11.800h-12.500z" fill="#fcfcfa" stroke="#dcd8cc" stroke-width=".8"/><path d="M11.400 .4v3.500h3.500" fill="#ece8dc" stroke="#d4d0c4" stroke-width=".6"/><rect x="4.200" y="4.500" width="5.600" height="6.500" fill="#6cbf4a" stroke="#3f8a2c" stroke-width=".5"/><rect x="4.800" y="5.200" width="4.400" height="3" fill="#c8e89a"/><path d="M7 9.500l4.800-6.300" stroke="#e8b828" stroke-width="1.500"/><path d="M11.300 3.800l.9-1.200" stroke="#2a2a2a" stroke-width="1.300"/></symbol>
<symbol id="lib" viewBox="0 0 16 16"><rect x="1" y="6.600" width="9" height="2.100" fill="#3a86c8"/><rect x="1.800" y="8.800" width="9.400" height="2.500" fill="#3fae7a"/><rect x=".8" y="11.500" width="11.600" height="4.600" fill="#d9823a"/><rect x=".8" y="11.500" width="11.600" height="1.600" fill="#f2b27a"/><path d="M9.600 3.900l2.800-.5 3.900 12.700h-4z" fill="#efb226" stroke="#c88a12" stroke-width=".4"/><path d="M11 5.500l.8 2.500.8 2.500.8 2.500" stroke="#fff3c8" stroke-width="1" stroke-dasharray="1 1.600" fill="none"/></symbol>
<symbol id="exp" viewBox="0 0 8 8"><path d="M6.800 1.200v5.600h-5.600z" fill="#161616" stroke="#a8a8a8" stroke-width=".6" stroke-dasharray="1 .6"/></symbol>
<symbol id="xclose" viewBox="0 0 10 10"><path d="M1.200 1.200l7.600 7.600M8.800 1.200l-7.600 7.600" stroke="#fff" stroke-width="1.900"/></symbol>
</defs></svg>
<div id="left" class="panel"><div class="abs tabbar"></div><div class="abs atab"></div><div class="abs" style="left:0;top:24.500px;width:323px;height:3.500px;background:#323335"></div></div>
<svg class="abs" style="left:11px;top:81px" width="11" height="14" viewBox="0 0 11 14"><path d="M1 .5v13M1 4h3.500M1 10h3.500" stroke="#c8c8c8" stroke-width="1"/><rect x="4.500" y="1" width="5.500" height="5.500" fill="#d98a1e"/><rect x="4.500" y="7.500" width="5.500" height="5.500" fill="#d98a1e"/><path d="M5.800 2.300h1.200v1.200h-1.200zM8 2.300h1.200v1.200h-1.200zM5.800 4.400h1.200v1.200h-1.200zM8 4.400h1.200v1.200h-1.200zM5.800 8.800h1.200v1.200h-1.200zM8 8.800h1.200v1.200h-1.200zM5.800 10.900h1.200v1.200h-1.200zM8 10.900h1.200v1.200h-1.200z" fill="#fbe49a"/></svg>
<div class="tab" style="left:28px;top:82px;color:#f2f2f2" id="pe">Package Explorer</div>
<svg class="abs" style="left:125px;top:84px" width="10" height="10"><use href="#xclose"/></svg>
<svg class="abs" style="left:176px;top:82px" width="13" height="13" viewBox="0 0 14 14"><rect x=".5" y=".5" width="10" height="9" fill="#dfe9f8" stroke="#9fb6dc" stroke-width=".8"/><rect x="3" y="3.500" width="10.500" height="9.500" fill="#f4f8fd" stroke="#8eaadc" stroke-width=".9"/><rect x="5" y="7.300" width="6.500" height="1.700" fill="#2c4f9a"/></svg>
<svg class="abs" style="left:197px;top:80px" width="16" height="16" viewBox="0 0 16 16"><path d="M.5 4.500l5.500-4.300v3h6.500v2.600h-6.500v3z" fill="#f6cf5a" stroke="#e8a820" stroke-width=".6"/><path d="M15.500 11l-5.500-4.300v3h-6.500v2.600h6.500v3z" fill="#f6cf5a" stroke="#e8a820" stroke-width=".6"/></svg>
<div class="abs" style="left:219.500px;top:79px;width:1px;height:18px;background:#2b2d2f"></div><div class="abs" style="left:220.500px;top:79px;width:1px;height:18px;background:#54585b"></div>
<svg class="abs" style="left:229px;top:81px" width="15" height="14" viewBox="0 0 15 14"><circle cx="4.500" cy="4" r="3.300" fill="#c4c4c4" stroke="#e0e0e0" stroke-width=".6"/><circle cx="10.500" cy="5.500" r="3.200" fill="#aaaaaa" stroke="#d4d4d4" stroke-width=".6"/><circle cx="5.500" cy="9.500" r="3.500" fill="#9d9d9d" stroke="#cfcfcf" stroke-width=".6"/><path d="M4 4h6" stroke="#eee" stroke-width="1"/></svg>
<div class="abs" style="left:261px;top:83.500px;width:0;height:0;border-left:3.700px solid transparent;border-right:3.700px solid transparent;border-top:4px solid #f4f4f4"></div>
<div class="abs" style="left:281px;top:83.500px;width:8.500px;height:2.700px;background:#fff"></div>
<div class="abs" style="left:303.600px;top:83.500px;width:8.500px;height:8.500px;background:#fff"></div><div class="abs" style="left:303.600px;top:84.700px;width:8.500px;height:1.200px;background:#4a4d50"></div>
<div class="abs" style="left:16px;top:109px;width:1px;height:11px;background:repeating-linear-gradient(180deg,#5c5c5c 0,#5c5c5c 1px,transparent 1px,transparent 2px)"></div>
<svg class="abs" style="left:28px;top:104px" width="16" height="16"><use href="#proj"/></svg>
<svg class="abs" style="left:27.7px;top:113px" width="7.500" height="8"><use href="#warn"/></svg>
<div class="tree" id="tr0" style="left:49px;top:104px">17-Days-G</div>
<div class="abs" style="left:16px;top:127px;width:1px;height:11px;background:repeating-linear-gradient(180deg,#5c5c5c 0,#5c5c5c 1px,transparent 1px,transparent 2px)"></div>
<svg class="abs" style="left:28px;top:122px" width="16" height="16"><use href="#proj"/></svg>
<div class="tree" id="tr1" style="left:49px;top:122px">4MagicMCKoxLimiter</div>
<div class="abs" style="left:16px;top:145px;width:1px;height:11px;background:repeating-linear-gradient(180deg,#5c5c5c 0,#5c5c5c 1px,transparent 1px,transparent 2px)"></div>
<svg class="abs" style="left:28px;top:140px" width="16" height="16"><use href="#proj"/></svg>
<svg class="abs" style="left:27px;top:149px" width="8" height="8"><use href="#err"/></svg>
<div class="tree" id="tr2" style="left:49px;top:140px">aEssentials</div>
<div class="abs" style="left:16px;top:163px;width:1px;height:11px;background:repeating-linear-gradient(180deg,#5c5c5c 0,#5c5c5c 1px,transparent 1px,transparent 2px)"></div>
<svg class="abs" style="left:28px;top:158px" width="16" height="16"><use href="#proj"/></svg>
<div class="tree" id="tr3" style="left:49px;top:158px">AntyAfk</div>
<div class="abs" style="left:16px;top:181px;width:1px;height:11px;background:repeating-linear-gradient(180deg,#5c5c5c 0,#5c5c5c 1px,transparent 1px,transparent 2px)"></div>
<svg class="abs" style="left:28px;top:176px" width="16" height="16"><use href="#proj"/></svg>
<svg class="abs" style="left:27.7px;top:185px" width="7.500" height="8"><use href="#warn"/></svg>
<div class="tree" id="tr4" style="left:49px;top:176px">BansLast</div>
<svg class="abs" style="left:15px;top:200.5px" width="6.500" height="6.500"><use href="#exp"/></svg>
<svg class="abs" style="left:28px;top:194px" width="16" height="16"><use href="#proj"/></svg>
<svg class="abs" style="left:27.7px;top:203px" width="7.500" height="8"><use href="#warn"/></svg>
<div class="tree" id="tr5" style="left:49px;top:194px">GoldenAppleLimiter</div>
<svg class="abs" style="left:34px;top:218.5px" width="6.500" height="6.500"><use href="#exp"/></svg>
<svg class="abs" style="left:47px;top:213px" width="16" height="16"><use href="#srcf"/></svg>
<svg class="abs" style="left:46.7px;top:221px" width="7.500" height="8"><use href="#warn"/></svg>
<div class="tree" id="tr6" style="left:68px;top:212px">src</div>
<svg class="abs" style="left:53px;top:236.5px" width="6.500" height="6.500"><use href="#exp"/></svg>
<svg class="abs" style="left:66px;top:229px" width="16" height="16"><use href="#pkg"/></svg>
<svg class="abs" style="left:65.7px;top:239px" width="7.500" height="8"><use href="#warn"/></svg>
<div class="tree" id="tr7" style="left:87px;top:230px">net.lastcraft.goldenapplelimiter</div>
<svg class="abs" style="left:72px;top:254.5px" width="6.500" height="6.500"><use href="#exp"/></svg>
<svg class="abs" style="left:85px;top:247px" width="16" height="16"><use href="#pkg"/></svg>
<svg class="abs" style="left:84.7px;top:257px" width="7.500" height="8"><use href="#warn"/></svg>
<div class="tree" id="tr8" style="left:106px;top:248px">events</div>
<div class="abs" style="left:92px;top:271px;width:1px;height:11px;background:repeating-linear-gradient(180deg,#5c5c5c 0,#5c5c5c 1px,transparent 1px,transparent 2px)"></div>
<svg class="abs" style="left:104px;top:267.3px" width="16" height="16"><use href="#jfile"/></svg>
<svg class="abs" style="left:103.7px;top:275px" width="7.500" height="8"><use href="#warn"/></svg>
<div class="tree" id="tr9" style="left:125px;top:266px">MoveEvent.java</div>
<div class="abs" style="left:73px;top:289px;width:1px;height:11px;background:repeating-linear-gradient(180deg,#5c5c5c 0,#5c5c5c 1px,transparent 1px,transparent 2px)"></div>
<svg class="abs" style="left:85px;top:285.3px" width="16" height="16"><use href="#jfile"/></svg>
<div class="tree" id="tr10" style="left:106px;top:284px">Main.java</div>
<svg class="abs" style="left:66px;top:303px" width="16" height="16"><use href="#ymlp"/></svg>
<div class="tree" id="tr11" style="left:87px;top:302px">plugin.yml</div>
<div class="abs" style="left:35px;top:325px;width:1px;height:11px;background:repeating-linear-gradient(180deg,#5c5c5c 0,#5c5c5c 1px,transparent 1px,transparent 2px)"></div>
<svg class="abs" style="left:47px;top:319.3px" width="16" height="16"><use href="#lib"/></svg>
<div class="tree" id="tr12" style="left:68px;top:320px">JRE System Library <span style="color:#a48c52">[JavaSE-1.7]</span></div>
<div class="abs" style="left:35px;top:343px;width:1px;height:11px;background:repeating-linear-gradient(180deg,#5c5c5c 0,#5c5c5c 1px,transparent 1px,transparent 2px)"></div>
<svg class="abs" style="left:47px;top:337.3px" width="16" height="16"><use href="#lib"/></svg>
<div class="tree" id="tr13" style="left:68px;top:338px">Referenced Libraries</div>
<div class="abs" style="left:16px;top:361px;width:1px;height:11px;background:repeating-linear-gradient(180deg,#5c5c5c 0,#5c5c5c 1px,transparent 1px,transparent 2px)"></div>
<svg class="abs" style="left:28px;top:356px" width="16" height="16"><use href="#proj"/></svg>
<svg class="abs" style="left:27.7px;top:365px" width="7.500" height="8"><use href="#warn"/></svg>
<div class="tree" id="tr14" style="left:49px;top:356px">LastAntyCheat</div>
<div class="abs" style="left:16px;top:379px;width:1px;height:11px;background:repeating-linear-gradient(180deg,#5c5c5c 0,#5c5c5c 1px,transparent 1px,transparent 2px)"></div>
<svg class="abs" style="left:28px;top:374px" width="16" height="16"><use href="#proj"/></svg>
<svg class="abs" style="left:27.7px;top:383px" width="7.500" height="8"><use href="#warn"/></svg>
<div class="tree" id="tr15" style="left:49px;top:374px">LastCore</div>
<div class="abs" style="left:16px;top:397px;width:1px;height:11px;background:repeating-linear-gradient(180deg,#5c5c5c 0,#5c5c5c 1px,transparent 1px,transparent 2px)"></div>
<svg class="abs" style="left:28px;top:392px" width="16" height="16"><use href="#proj"/></svg>
<svg class="abs" style="left:27.5px;top:396.3px" width="6.500" height="13"><use href="#excl"/></svg>
<div class="tree" id="tr16" style="left:49px;top:392px">LastProxy</div>
<div class="abs" style="left:16px;top:415px;width:1px;height:11px;background:repeating-linear-gradient(180deg,#5c5c5c 0,#5c5c5c 1px,transparent 1px,transparent 2px)"></div>
<svg class="abs" style="left:28px;top:410px" width="16" height="16"><use href="#proj"/></svg>
<svg class="abs" style="left:27.7px;top:419px" width="7.500" height="8"><use href="#warn"/></svg>
<div class="tree" id="tr17" style="left:49px;top:410px">LCGuilds</div>
<div class="abs" style="left:16px;top:433px;width:1px;height:11px;background:repeating-linear-gradient(180deg,#5c5c5c 0,#5c5c5c 1px,transparent 1px,transparent 2px)"></div>
<svg class="abs" style="left:28px;top:428px" width="16" height="16"><use href="#proj"/></svg>
<svg class="abs" style="left:27.7px;top:437px" width="7.500" height="8"><use href="#warn"/></svg>
<div class="tree" id="tr18" style="left:49px;top:428px">LCMultiEnderchests</div>
<div class="abs" style="left:16px;top:451px;width:1px;height:11px;background:repeating-linear-gradient(180deg,#5c5c5c 0,#5c5c5c 1px,transparent 1px,transparent 2px)"></div>
<svg class="abs" style="left:28px;top:446px" width="16" height="16"><use href="#proj"/></svg>
<svg class="abs" style="left:27.7px;top:455px" width="7.500" height="8"><use href="#warn"/></svg>
<div class="tree" id="tr19" style="left:49px;top:446px">LCSectors</div>
<div class="abs" style="left:16px;top:469px;width:1px;height:11px;background:repeating-linear-gradient(180deg,#5c5c5c 0,#5c5c5c 1px,transparent 1px,transparent 2px)"></div>
<svg class="abs" style="left:28px;top:464px" width="16" height="16"><use href="#proj"/></svg>
<svg class="abs" style="left:27.7px;top:473px" width="7.500" height="8"><use href="#warn"/></svg>
<div class="tree" id="tr20" style="left:49px;top:464px">LogMe</div>
<div class="abs" style="left:16px;top:487px;width:1px;height:11px;background:repeating-linear-gradient(180deg,#5c5c5c 0,#5c5c5c 1px,transparent 1px,transparent 2px)"></div>
<svg class="abs" style="left:28px;top:482px" width="16" height="16"><use href="#proj"/></svg>
<svg class="abs" style="left:27.7px;top:491px" width="7.500" height="8"><use href="#warn"/></svg>
<div class="tree" id="tr21" style="left:49px;top:482px">LSChoroby</div>
<div class="abs" style="left:16px;top:505px;width:1px;height:11px;background:repeating-linear-gradient(180deg,#5c5c5c 0,#5c5c5c 1px,transparent 1px,transparent 2px)"></div>
<svg class="abs" style="left:28px;top:500px" width="16" height="16"><use href="#proj"/></svg>
<svg class="abs" style="left:27.7px;top:509px" width="7.500" height="8"><use href="#warn"/></svg>
<div class="tree" id="tr22" style="left:49px;top:500px">MtoolsL</div>
<div class="abs" style="left:16px;top:523px;width:1px;height:11px;background:repeating-linear-gradient(180deg,#5c5c5c 0,#5c5c5c 1px,transparent 1px,transparent 2px)"></div>
<svg class="abs" style="left:28px;top:518px" width="16" height="16"><use href="#proj"/></svg>
<div class="tree" id="tr23" style="left:49px;top:518px">pets</div>
<div class="abs" style="left:16px;top:541px;width:1px;height:11px;background:repeating-linear-gradient(180deg,#5c5c5c 0,#5c5c5c 1px,transparent 1px,transparent 2px)"></div>
<svg class="abs" style="left:28px;top:536px" width="16" height="16"><use href="#proj"/></svg>
<svg class="abs" style="left:27.7px;top:545px" width="7.500" height="8"><use href="#warn"/></svg>
<div class="tree" id="tr24" style="left:49px;top:536px">RzucaneTnT</div>
<div class="abs" style="left:16px;top:559px;width:1px;height:11px;background:repeating-linear-gradient(180deg,#5c5c5c 0,#5c5c5c 1px,transparent 1px,transparent 2px)"></div>
<svg class="abs" style="left:28px;top:554px" width="16" height="16"><use href="#proj"/></svg>
<svg class="abs" style="left:27.7px;top:563px" width="7.500" height="8"><use href="#warn"/></svg>
<div class="tree" id="tr25" style="left:49px;top:554px">SurvivalCore</div>
<div class="abs" style="left:16px;top:577px;width:1px;height:11px;background:repeating-linear-gradient(180deg,#5c5c5c 0,#5c5c5c 1px,transparent 1px,transparent 2px)"></div>
<svg class="abs" style="left:28px;top:572px" width="16" height="16"><use href="#proj"/></svg>
<svg class="abs" style="left:27.7px;top:581px" width="7.500" height="8"><use href="#warn"/></svg>
<div class="tree" id="tr26" style="left:49px;top:572px">Swinki</div>
<div class="abs" style="left:16px;top:595px;width:1px;height:11px;background:repeating-linear-gradient(180deg,#5c5c5c 0,#5c5c5c 1px,transparent 1px,transparent 2px)"></div>
<svg class="abs" style="left:28px;top:590px" width="16" height="16"><use href="#proj"/></svg>
<div class="tree" id="tr27" style="left:49px;top:590px">Zamowienie#1</div>
<div id="ed" class="panel"><div class="abs tabbar"></div><div class="abs" style="left:840px;top:1px;width:132px;height:25px;background:#272727;border-radius:6px 6px 0 0"></div><div class="abs" style="left:0;top:26px;width:1343px;height:3px;background:#262626"></div></div>
<svg class="abs" style="left:336.8px;top:81px" width="16" height="16"><use href="#jfile"/></svg>
<div class="tab" style="left:357px;top:82px;color:#dadada" id="t0">Main.java</div>
<svg class="abs" style="left:437.8px;top:81px" width="16" height="16"><use href="#jfile"/></svg>
<div class="tab" style="left:458px;top:82px;color:#dadada" id="t1">MoveListener.java</div>
<svg class="abs" style="left:582.8px;top:81px" width="16" height="16"><use href="#jfile"/></svg>
<div class="tab" style="left:603px;top:82px;color:#dadada" id="t2">BungeeUtils.java</div>
<svg class="abs" style="left:720.3px;top:81px" width="16" height="16"><use href="#yml"/></svg>
<div class="tab" style="left:740px;top:82px;color:#dadada" id="t3">plugin.yml</div>
<svg class="abs" style="left:825.8px;top:81px" width="16" height="16"><use href="#jfile"/></svg>
<div class="tab" style="left:845px;top:82px;color:#dadada" id="t4">InteractEvent.java</div>
<svg class="abs" style="left:969.5px;top:81px" width="16" height="16"><use href="#yml"/></svg>
<div class="tab" style="left:989px;top:82px;color:#dadada" id="t5">plugin.yml</div>
<svg class="abs" style="left:1074.8px;top:81px" width="16" height="16"><use href="#jfile"/></svg>
<div class="tab" style="left:1095px;top:82px;color:#dadada" id="t6">Main.java</div>
<svg class="abs" style="left:1177.0px;top:81px" width="16" height="16"><use href="#jfile"/></svg>
<svg class="abs" style="left:1176.2px;top:89px" width="7.500" height="8"><use href="#warn"/></svg>
<div class="tab" style="left:1196px;top:82px;color:#f4f4f4" id="t7">MoveEvent.java</div>
<svg class="abs" style="left:1309.5px;top:81px" width="16" height="16"><use href="#jfile"/></svg>
<svg class="abs" style="left:1308.7px;top:89px" width="7.500" height="8"><use href="#warn"/></svg>
<div class="tab" style="left:1329px;top:82px;color:#dadada" id="t8">broadcastCMD.java</div>
<svg class="abs" style="left:1462.0px;top:81px" width="16" height="16"><use href="#jfile"/></svg>
<div class="tab" style="left:1482px;top:82px;color:#dadada" id="t9">lastproxycore.java</div>
<svg class="abs" style="left:1287px;top:84px" width="10" height="10"><use href="#xclose"/></svg>
<div class="abs" style="left:1629.500px;top:83.500px;width:8.500px;height:2.700px;background:#fff"></div>
<div class="abs" style="left:1653px;top:83.500px;width:8.500px;height:8.500px;background:#fff"></div><div class="abs" style="left:1653px;top:84.700px;width:8.500px;height:1.200px;background:#44484a"></div>
<div class="abs" style="left:335px;top:404px;width:12px;height:255px;background-color:#b6e6f8;background-image:linear-gradient(45deg,#6a9fd2 25%,transparent 25%,transparent 75%,#6a9fd2 75%),linear-gradient(45deg,#6a9fd2 25%,transparent 25%,transparent 75%,#6a9fd2 75%);background-size:2px 2px;background-position:0 0,1px 1px"></div>
<div class="abs" style="left:638px;top:419px;width:127px;height:15px;background:#b98a0c"></div>
<div class="abs" style="left:373px;top:584px;width:1271px;height:15px;background:#383838"></div>
<div class="abs" style="left:1644px;top:104px;width:17px;height:874px;background:#f0f0f0"></div>
<div class="abs" style="left:371px;top:961px;width:1290px;height:17px;background:#f0f0f0"></div>
<svg class="abs" style="left:1648.700px;top:110.300px" width="7.800" height="5.300" viewBox="0 0 9 6"><path d="M.8 5.200l3.700-3.700 3.700 3.700" stroke="#b0b0b0" stroke-width="2.100" fill="none"/></svg>
<svg class="abs" style="left:1648.700px;top:949.500px" width="7.800" height="5.300" viewBox="0 0 9 6"><path d="M.8 .8l3.700 3.700 3.700-3.700" stroke="#b0b0b0" stroke-width="2.100" fill="none"/></svg>
<svg class="abs" style="left:376px;top:965.500px" width="5.500" height="8" viewBox="0 0 6 9"><path d="M5.200 .8l-3.700 3.700 3.700 3.700" stroke="#b0b0b0" stroke-width="2.100" fill="none"/></svg>
<svg class="abs" style="left:1632.800px;top:965.700px" width="5.500" height="8" viewBox="0 0 6 9"><path d="M.8 .8l3.700 3.700-3.700 3.700" stroke="#b0b0b0" stroke-width="2.100" fill="none"/></svg>
<div class="abs" style="left:1663px;top:108px;width:8px;height:8px;background:#bd8c0c;border:1px solid #cdb26a"></div>
<div class="abs" style="left:1661px;top:120px;width:12px;height:1px;background:#d8d8d8"></div>
<div class="abs" style="left:1663px;top:139px;width:9px;height:5px;border:1px solid #a07a14"></div>
<div class="abs" style="left:1663px;top:424px;width:9px;height:5px;border:1px solid #a07a14"></div>
<div id="ln"><div>1</div><div>2</div><div>3</div><div>18</div><div>19</div><div>20</div><div>21</div><div>22</div><div>23</div><div>24</div><div>25</div><div>26</div><div>27</div><div>28</div><div>29</div><div>30</div><div>31</div><div>32</div><div>33</div><div>34</div><div>35</div><div>36</div><div>37</div><div>38</div><div>39</div><div>40</div><div>41</div><div>42</div><div>43</div><div>44</div><div>45</div><div>46</div><div>47</div><div>48</div><div>49</div><div>50</div><div>51</div><div>52</div><div>53</div><div>54</div><div>55</div></div>
<svg class="abs" style="left:361px;top:137px" width="9" height="9" viewBox="0 0 9 9"><rect x=".3" y=".3" width="8.400" height="8.400" rx="2.300" fill="#e9eff8" stroke="#c4d0e4" stroke-width=".6"/><path d="M2.300 4.500h4.400M4.500 2.300v4.400" stroke="#24406e" stroke-width="1"/></svg>
<svg class="abs" style="left:361px;top:242px" width="9" height="9" viewBox="0 0 9 9"><rect x=".3" y=".3" width="8.400" height="8.400" rx="2.300" fill="#e9eff8" stroke="#c4d0e4" stroke-width=".6"/><path d="M2.500 4.500h4" stroke="#7486a8" stroke-width="1.100"/></svg>
<svg class="abs" style="left:361px;top:317px" width="9" height="9" viewBox="0 0 9 9"><rect x=".3" y=".3" width="8.400" height="8.400" rx="2.300" fill="#e9eff8" stroke="#c4d0e4" stroke-width=".6"/><path d="M2.500 4.500h4" stroke="#7486a8" stroke-width="1.100"/></svg>
<svg class="abs" style="left:361px;top:377px" width="9" height="9" viewBox="0 0 9 9"><rect x=".3" y=".3" width="8.400" height="8.400" rx="2.300" fill="#e9eff8" stroke="#c4d0e4" stroke-width=".6"/><path d="M2.500 4.500h4" stroke="#7486a8" stroke-width="1.100"/></svg>
<svg class="abs" style="left:361px;top:392px" width="9" height="9" viewBox="0 0 9 9"><rect x=".3" y=".3" width="8.400" height="8.400" rx="2.300" fill="#e9eff8" stroke="#c4d0e4" stroke-width=".6"/><path d="M2.500 4.500h4" stroke="#7486a8" stroke-width="1.100"/></svg>
<svg class="abs" style="left:361px;top:407px" width="9" height="9" viewBox="0 0 9 9"><rect x=".3" y=".3" width="8.400" height="8.400" rx="2.300" fill="#e9eff8" stroke="#c4d0e4" stroke-width=".6"/><path d="M2.500 4.500h4" stroke="#7486a8" stroke-width="1.100"/></svg>
<svg class="abs" style="left:334.300px;top:134.5px" width="13" height="14.500" viewBox="0 0 13 14"><path d="M4.500 .5c3 0 4.500 2 4.500 4 0 1.500-1 2.500-1.500 3.500v2h-4v-2c-.5-1-2-2-2-3.500 0-2 1-4 3-4z" fill="#f6e6a8" stroke="#c9a23a" stroke-width=".7"/><rect x="3.500" y="10" width="3.500" height="2.500" fill="#b8a060"/><path d="M9 5.500l3.700 7.500h-7.400z" fill="#f6c944" stroke="#d9a21c" stroke-width=".6"/><path d="M9 8v2.500" stroke="#3a2a00" stroke-width="1.100"/><rect x="8.450" y="11.200" width="1.100" height="1" fill="#3a2a00"/></svg>
<svg class="abs" style="left:334.300px;top:419.5px" width="13" height="14.500" viewBox="0 0 13 14"><path d="M4.500 .5c3 0 4.500 2 4.500 4 0 1.500-1 2.500-1.500 3.500v2h-4v-2c-.5-1-2-2-2-3.500 0-2 1-4 3-4z" fill="#f6e6a8" stroke="#c9a23a" stroke-width=".7"/><rect x="3.500" y="10" width="3.500" height="2.500" fill="#b8a060"/><path d="M9 5.500l3.700 7.500h-7.400z" fill="#f6c944" stroke="#d9a21c" stroke-width=".6"/><path d="M9 8v2.500" stroke="#3a2a00" stroke-width="1.100"/><rect x="8.450" y="11.200" width="1.100" height="1" fill="#3a2a00"/></svg>
<svg class="abs" style="left:336px;top:406px" width="11" height="10" viewBox="0 0 11 10"><path d="M5.500 1.200l4.600 5.800h-9.200z" fill="#f6ecf4" stroke="#3b3485" stroke-width="1"/></svg>
<div id="code"><div><span class="k">package</span> net.lastcraft.goldenapplelimiter.events;</div><div></div><div><span class="k">import</span> java.util.Random;<span style="display:inline-block;width:8.200px;height:12px;border:1px solid #8e8e8e;vertical-align:-2px;box-sizing:border-box;background:radial-gradient(circle at 2px 8.500px,#aaa .7px,transparent .9px),radial-gradient(circle at 4.500px 8.500px,#aaa .7px,transparent .9px)"></span></div><div></div><div><span class="k">public</span> <span class="k">class</span> <span class="c">MoveEvent</span> <span class="k">implements</span> <span class="i">Listener</span> <span class="b">{</span></div><div></div><div>    <span class="k">private</span> <span class="k">static</span> <span class="c">ItemStack</span> <span class="sf">kox</span> = <span class="k">new</span> <span class="ct">ItemStack</span><span class="b">(</span><span class="en">Material</span>.<span class="sfb">GOLDEN_APPLE</span>, <span class="n">1</span>, <span class="b">(</span><span class="k">short</span><span class="b">)</span> <span class="n">1</span><span class="b">)</span>;</div><div>    <span class="k">private</span> <span class="k">static</span> <span class="k">final</span> <span class="c">Random</span> <span class="sfb">RAND</span> = <span class="k">new</span> <span class="ct">Random</span><span class="b">()</span>;</div><div></div><div>    <span class="k">public</span> <span class="k">static</span> <span class="k">double</span> <span class="md">getRandDouble</span><span class="b">(</span><span class="k">double</span> <span class="pv">min</span>, <span class="k">double</span> <span class="pv">max</span><span class="b">)</span> <span class="k">throws</span> <span class="c">IllegalArgumentException</span><span class="b">{</span></div><div>        <span class="c">Validate</span>.<span class="sm">isTrue</span><span class="b">(</span><span class="pv">max</span> &gt; <span class="pv">min</span>, <span class="s">"Max can't be smaller than min!"</span><span class="b">)</span>;</div><div>        <span class="k">return</span> <span class="sfb">RAND</span>.<span class="m">nextDouble</span><span class="b">()</span> * <span class="b">(</span><span class="pv">max</span> - <span class="pv">min</span><span class="b">)</span> + <span class="pv">min</span>;</div><div>    <span class="b">}</span></div><div></div><div>    <span class="k">public</span> <span class="k">static</span> <span class="k">boolean</span> <span class="md">getChance</span><span class="b">(</span><span class="k">double</span> <span class="pv">chance</span><span class="b">){</span></div><div>        <span class="k">return</span> <span class="b">(</span><span class="pv">chance</span> &gt;= <span class="n">100</span><span class="b">)</span> || <span class="b">(</span><span class="pv">chance</span> &gt;= <span class="sm">getRandDouble</span><span class="b">(</span><span class="n">0</span>, <span class="n">100</span><span class="b">))</span>;</div><div>    <span class="b">}</span></div><div></div><div>    <span class="k">public</span> <span class="k">static</span> <span class="k">void</span> <span class="md">start</span><span class="b">(){</span></div><div>        <span class="c">Bukkit</span>.<span class="sm">getScheduler</span><span class="b">()</span>.<span class="m">runTaskTimer</span><span class="b">(</span><span class="c">Main</span>.<span class="sm">getInst</span><span class="b">()</span>, <span class="k">new</span> <span class="ct">Runnable</span><span class="b">(){</span></div><div>            <span class="k">public</span> <span class="k">void</span> <span class="md">run</span><span class="b">(){</span></div><div>                <span class="k">for</span><span class="b">(</span><span class="i">Player</span> <span class="lv">p</span> : <span class="c">Bukkit</span>.<span class="depbg"><span class="dep">getOnlinePlayers</span>()</span><span class="b">){</span></div><div>                    <span class="k">if</span><span class="b">(</span><span class="lv">p</span>.<span class="m">hasPotionEffect</span><span class="b">(</span><span class="c">PotionEffectType</span>.<span class="sfb">SLOW</span><span class="b">)</span> &amp;&amp; <span class="lv">p</span>.<span class="m">hasPotionEffect</span><span class="b">(</span><span class="c">PotionEffectType</span>.<span class="sfb">WEAKNESS</span><span class="b">)</span> &amp;&amp; <span class="b">(</span>!<span class="lv">p</span>.<span class="m">getInventory</span><span class="b">()</span>.<span class="m">containsAtLeast</span><span class="b">(</span><span class="sf">kox</span>, <span class="n">6</span><span class="b">))){</span></div><div>                        <span class="lv">p</span>.<span class="m">removePotionEffect</span><span class="b">(</span><span class="c">PotionEffectType</span>.<span class="sfb">SLOW</span><span class="b">)</span>;</div><div>                        <span class="lv">p</span>.<span class="m">removePotionEffect</span><span class="b">(</span><span class="c">PotionEffectType</span>.<span class="sfb">WEAKNESS</span><span class="b">)</span>;</div><div>                        <span class="lv">p</span>.<span class="m">sendMessage</span><span class="b">(</span><span class="s">"§6Limiter §7» §aNie masz juz za duzo koxow. Efekty zabrane."</span><span class="b">)</span>;</div><div>                        <span class="k">return</span>;</div><div>                    <span class="b">}</span></div><div>                    <span class="k">if</span><span class="b">(</span><span class="lv">p</span>.<span class="m">getInventory</span><span class="b">()</span>.<span class="m">containsAtLeast</span><span class="b">(</span><span class="sf">kox</span>, <span class="n">6</span><span class="b">)){</span></div><div>                        <span class="lv">p</span>.<span class="m">addPotionEffect</span><span class="b">(</span><span class="k">new</span> <span class="ct">PotionEffect</span><span class="b">(</span><span class="c">PotionEffectType</span>.<span class="sfb">SLOW</span>, <span class="n">234234</span>, <span class="n">4</span><span class="b">))</span>;</div><div>                        <span class="lv">p</span>.<span class="m">addPotionEffect</span><span class="b">(</span><span class="k">new</span> <span class="ct">PotionEffect</span><span class="b">(</span><span class="c">PotionEffectType</span>.<span class="sfb">WEAKNESS</span>, <span class="n">234234</span>, <span class="n">4</span><span class="b">))</span>;</div><div>                        <span class="k">if</span><span class="b">(</span><span class="sm">getChance</span><span class="b">(</span><span class="n">40</span><span class="b">)){</span></div><div>                            <span class="lv">p</span>.<span class="m">sendMessage</span><span class="b">(</span><span class="s">"§64Limiter §7» §cPosiadasz za duzo Koxow w EQ, (max. 5)"</span><span class="b">)</span>;</div><div>                        <span class="b">}</span></div><div>                    <span class="b">}</span></div><div>                <span class="b">}</span></div><div>            <span class="b">}</span></div><div>        <span class="b">}</span>, <span class="n">20</span>, <span class="n">40</span><span class="b">)</span>;</div><div>    <span class="b">}</span></div><div><span class="b">}</span></div><div></div></div>
<div class="abs" style="left:743px;top:584px;width:2px;height:15px;background:#f0f0f0"></div>
<div id="status" class="abs">
<i style="left:1097px"></i><span id="s0" style="left:1105px">Writable</span>
<i style="left:1201px"></i><span id="s1" style="left:1209px">Smart Insert</span>
<i style="left:1299px"></i><span id="s2" style="left:1307px">47 : 54</span>
<div class="abs" style="left:1395px;top:9px;width:2px;height:16px;background:repeating-linear-gradient(180deg,#e4e4e4 0,#e4e4e4 2px,transparent 2px,transparent 4.400px)"></div>
</div>
</body></html>
